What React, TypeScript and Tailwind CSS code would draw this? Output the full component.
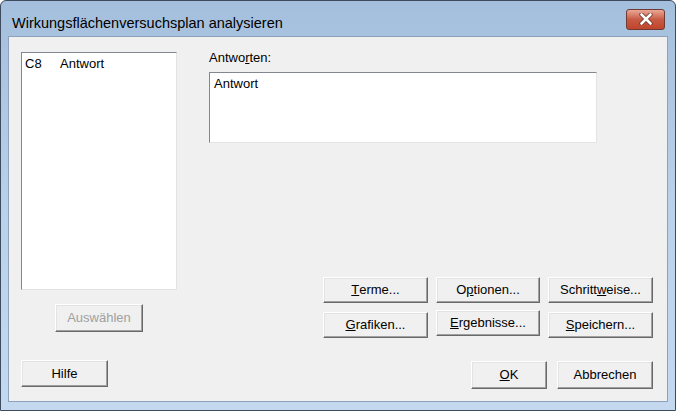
import React from 'react';

const font = { fontFamily: '"Liberation Sans", Arial, sans-serif' };

function Btn({
  children,
  className = '',
  disabled = false,
}: {
  children: React.ReactNode;
  className?: string;
  disabled?: boolean;
}) {
  return (
    <button
      className={
        'flex items-center justify-center bg-[#f0f0f0] text-[13px] border border-t-white border-l-white border-r-[#696969] border-b-[#696969] shadow-[inset_-1px_-1px_0_#a0a0a0,inset_1px_1px_0_#e3e3e3] ' +
        (disabled ? 'text-[#a0a0a0] ' : 'text-black ') +
        className
      }
    >
      {children}
    </button>
  );
}

export default function App() {
  return (
    <div
      className="w-[676px] h-[411px] flex flex-col rounded-t-[6px] border border-[#3c4c5e] bg-gradient-to-b from-[#a4bfdd] via-[#b9d1ea] to-[#c4d9f0] overflow-hidden"
      style={font}
    >
      {/* title bar */}
      <div className="h-[35px] flex items-center justify-between pl-[11px] pr-[10px] shrink-0">
        <span className="text-[14.5px] leading-[18px] text-black pt-[8px]">Wirkungsflächenversuchsplan analysieren</span>
        <div className="w-[39px] h-[21px] mt-[1px] rounded-[3px] border border-[#6e3a32] bg-gradient-to-b from-[#e9a897] via-[#c75a44] to-[#c0442c] flex items-center justify-center">
          <svg width="14" height="12" viewBox="0 0 14 12">
            <path
              d="M2.5 1.5 L11.5 10.5 M11.5 1.5 L2.5 10.5"
              stroke="#6a3025"
              strokeWidth="4.2"
              fill="none"
              strokeLinecap="round"
            />
            <path
              d="M2.5 1.5 L11.5 10.5 M11.5 1.5 L2.5 10.5"
              stroke="white"
              strokeWidth="2.6"
              fill="none"
              strokeLinecap="round"
            />
          </svg>
        </div>
      </div>

      {/* client area */}
      <div className="flex-1 mx-[7px] mb-[8px] bg-[#f0f0f0] border border-[#8da2ba] flex flex-col pl-[12px] pr-[14px] pt-[15px]">
        <div className="flex">
          {/* left column */}
          <div className="w-[156px] flex flex-col items-center shrink-0">
            <div className="w-full h-[238px] bg-white border border-[#828790] border-r-[#e3e3e3] border-b-[#e3e3e3] px-[3px] pt-[3px]">
              <div className="flex text-[13px] text-black leading-[15px]">
                <span className="w-[35px]">C8</span>
                <span>Antwort</span>
              </div>
            </div>
            <Btn disabled className="mt-[14px] w-[88px] h-[28px]">
              Auswählen
            </Btn>
          </div>

          {/* right column */}
          <div className="flex-1 ml-[32px] flex flex-col">
            <span className="text-[13px] text-black leading-[15px] -mt-[2px]">
              Antwo<span className="underline">r</span>ten:
            </span>
            <div className="mt-[7px] w-[388px] h-[71px] bg-white border border-[#828790] border-r-[#e3e3e3] border-b-[#e3e3e3] px-[4px] pt-[3px]">
              <div className="text-[13px] text-black leading-[15px]">Antwort</div>
            </div>

            <div className="mt-[134px] self-end grid grid-cols-[105px_104px_105px] gap-x-[8px]">
              <Btn className="h-[26px]">
                <span className="underline">T</span>erme...
              </Btn>
              <Btn className="h-[26px]">
                O<span className="underline">p</span>tionen...
              </Btn>
              <Btn className="h-[26px]">
                Schritt<span className="underline">w</span>eise...
              </Btn>
            </div>
            <div className="mt-[7px] self-end flex items-start gap-x-[8px]">
              <Btn className="h-[26px] w-[105px] mt-[2px]">
                <span className="underline">G</span>rafiken...
              </Btn>
              <Btn className="h-[26px] w-[104px]">
                <span className="underline">E</span>rgebnisse...
              </Btn>
              <Btn className="h-[26px] w-[105px] mt-[2px]">
                <span className="underline">S</span>peichern...
              </Btn>
            </div>
          </div>
        </div>

        {/* bottom row */}
        <div className="mt-[22px] flex items-start">
          <Btn className="w-[87px] h-[27px]">Hilfe</Btn>
          <div className="flex-1" />
          <Btn className="w-[76px] h-[28px] mt-[1px]">
            <span className="underline">O</span>K
          </Btn>
          <Btn className="w-[96px] h-[28px] mt-[1px] ml-[10px]">Abbrechen</Btn>
        </div>
      </div>
    </div>
  );
}
